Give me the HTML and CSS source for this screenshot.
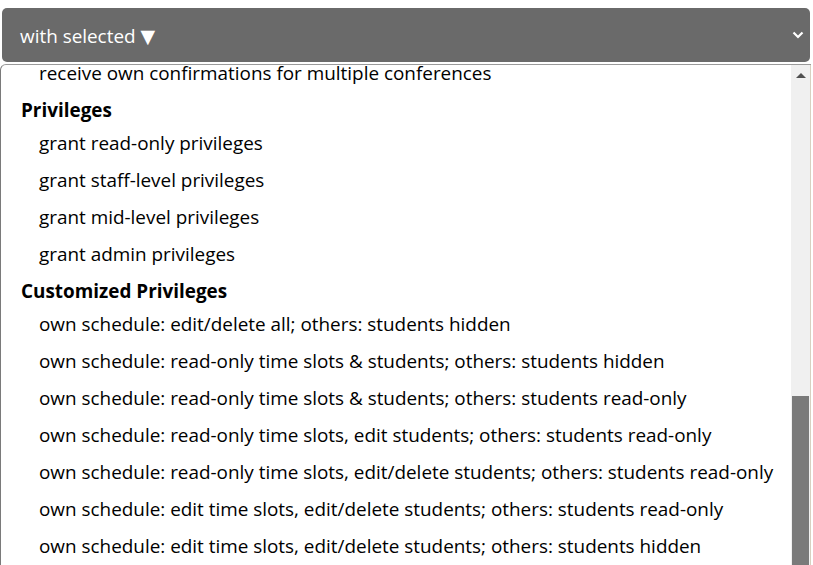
FILE: index.html
```html
<!DOCTYPE html>
<html>
<head>
<meta charset="utf-8">
<link rel="stylesheet" href="styles.css">
</head>
<body>
<div class="page">
  <div class="select-bar">
    <span class="select-label">with selected <span class="tri">▼</span></span>
    <svg class="chevron" width="12" height="8" viewBox="0 0 12 8"><path d="M1.5 1.5 L6 6 L10.5 1.5" fill="none" stroke="#fff" stroke-width="2.2"/></svg>
  </div>
  <div class="listbox">
    <div class="options">
      <div class="opt first">receive own confirmations for multiple conferences</div>
      <div class="group">Privileges</div>
      <div class="opt">grant read-only privileges</div>
      <div class="opt">grant staff-level privileges</div>
      <div class="opt">grant mid-level privileges</div>
      <div class="opt">grant admin privileges</div>
      <div class="group">Customized Privileges</div>
      <div class="opt">own schedule: edit/delete all; others: students hidden</div>
      <div class="opt">own schedule: read-only time slots &amp; students; others: students hidden</div>
      <div class="opt">own schedule: read-only time slots &amp; students; others: students read-only</div>
      <div class="opt">own schedule: read-only time slots, edit students; others: students read-only</div>
      <div class="opt">own schedule: read-only time slots, edit/delete students; others: students read-only</div>
      <div class="opt">own schedule: edit time slots, edit/delete students; others: students read-only</div>
      <div class="opt">own schedule: edit time slots, edit/delete students; others: students hidden</div>
    </div>
    <div class="scrollbar">
      <div class="arrow-up"></div>
      <div class="track"></div>
      <div class="thumb"></div>
    </div>
  </div>
</div>
</body>
</html>
```
FILE: styles.css
```css
html, body {
  margin: 0;
  padding: 0;
  background: #ffffff;
  overflow: hidden;
}
.page {
  width: 813px;
  height: 565px;
  display: flex;
  flex-direction: column;
  font-family: "Open Sans", "Noto Sans", sans-serif;
  padding-top: 8px;
  box-sizing: border-box;
}
.select-bar {
  margin: 0 3px 0 2px;
  height: 54px;
  background: #6a6a6a;
  border-radius: 5px;
  display: flex;
  align-items: center;
  justify-content: space-between;
  padding: 0 6px 0 18px;
  color: #fff;
  flex-shrink: 0;
}
.select-label {
  font-size: 18.9px;
  padding-top: 2px;
}
.tri {
  font-family: "DejaVu Sans", sans-serif;
  font-size: 19px;
}
.listbox {
  margin-top: 2px;
  flex: 1;
  display: flex;
  border-left: 1px solid #7a7a7a;
  border-top: 1px solid #9a9a9a;
  border-top-left-radius: 6px;
  background: #fff;
  margin-right: 2px;
  overflow: hidden;
}
.options {
  flex: 1;
  color: #000;
  font-size: 18.9px;
}
.opt {
  height: 37px;
  line-height: 37px;
  padding-left: 38px;
  white-space: nowrap;
}
.opt.first {
  height: 27px;
  line-height: 17px;
}
.group {
  height: 37px;
  line-height: 37px;
  padding-left: 20px;
  font-weight: 700;
  margin-bottom: -4px;
}
.scrollbar {
  width: 19px;
  background: #f0f0f0;
  display: flex;
  flex-direction: column;
  align-items: center;
  border-right: 1px solid #d8d0c0;
}
.arrow-up {
  margin-top: 8px;
  width: 0;
  height: 0;
  border-left: 5px solid transparent;
  border-right: 5px solid transparent;
  border-bottom: 5px solid #505050;
}
.track {
  height: 318px;
}
.thumb {
  width: 17px;
  flex: 1;
  background: #7a7a7a;
}
```
